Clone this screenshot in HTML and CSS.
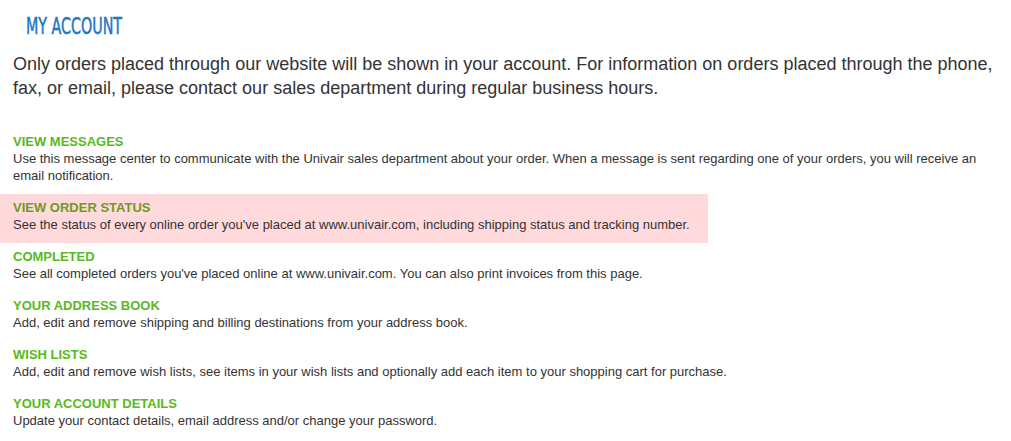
FILE: index.html
```html
<!DOCTYPE html>
<html>
<head>
<meta charset="utf-8">
<link rel="stylesheet" href="styles.css">
</head>
<body>
<div class="page">
  <h1 class="title"><span class="title-text">MY ACCOUNT</span></h1>
  <p class="intro">Only orders placed through our website will be shown in your account. For information on orders placed through the phone, fax, or email, please contact our sales department during regular business hours.</p>
  <ul class="menu">
    <li class="item">
      <a class="item-title" href="#">VIEW MESSAGES</a>
      <div class="item-desc">Use this message center to communicate with the Univair sales department about your order. When a message is sent regarding one of your orders, you will receive an email notification.</div>
    </li>
    <li class="item item-active">
      <a class="item-title" href="#">VIEW ORDER STATUS</a>
      <div class="item-desc">See the status of every online order you've placed at www.univair.com, including shipping status and tracking number.</div>
    </li>
    <li class="item">
      <a class="item-title" href="#">COMPLETED</a>
      <div class="item-desc">See all completed orders you've placed online at www.univair.com. You can also print invoices from this page.</div>
    </li>
    <li class="item">
      <a class="item-title" href="#">YOUR ADDRESS BOOK</a>
      <div class="item-desc">Add, edit and remove shipping and billing destinations from your address book.</div>
    </li>
    <li class="item">
      <a class="item-title" href="#">WISH LISTS</a>
      <div class="item-desc">Add, edit and remove wish lists, see items in your wish lists and optionally add each item to your shopping cart for purchase.</div>
    </li>
    <li class="item">
      <a class="item-title" href="#">YOUR ACCOUNT DETAILS</a>
      <div class="item-desc">Update your contact details, email address and/or change your password.</div>
    </li>
  </ul>
</div>
</body>
</html>
```
FILE: styles.css
```css
html, body {
  margin: 0;
  padding: 0;
  background: #ffffff;
}
body {
  font-family: "Liberation Sans", Arial, sans-serif;
  color: #333333;
}
.page {
  width: 1011px;
}
.title {
  margin: 0;
  padding: 12px 0 0 26px;
  height: 28px;
  font-family: "DejaVu Sans Condensed", "DejaVu Sans", sans-serif;
  font-weight: normal;
  font-size: 23px;
  line-height: 28px;
  color: #1f77c0;
}
.title-text {
  display: inline-block;
  transform: scaleX(0.69);
  transform-origin: left center;
  white-space: nowrap;
  -webkit-text-stroke: 0.5px #1f77c0;
}
.intro {
  margin: 12px 0 0 0;
  padding: 0 13px;
  font-size: 18px;
  line-height: 24px;
  color: #333333;
}
.menu {
  list-style: none;
  margin: 28px 0 0 0;
  padding: 0;
}
.item {
  padding: 5px 13px 10px 13px;
  font-size: 13px;
  line-height: 17px;
}
.item-active {
  width: 682px;
  background: #ffd9dc;
}
.item-title {
  display: block;
  font-weight: bold;
  color: #58b920;
  text-decoration: none;
}
.item-active .item-title {
  color: #6f9a1c;
}
.item-desc {
  color: #333333;
}
```
